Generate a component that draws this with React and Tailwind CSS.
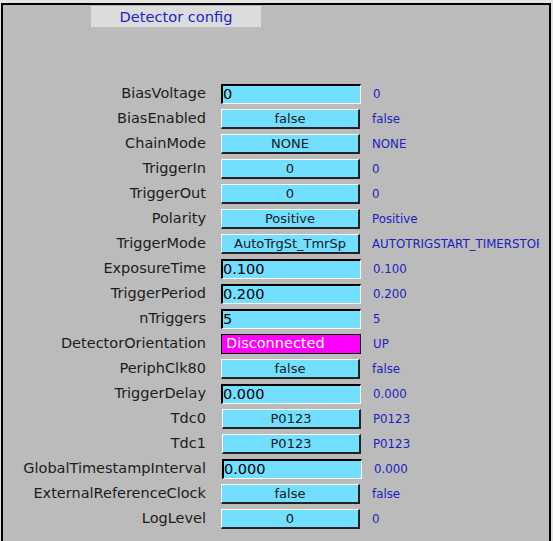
const rows = [
  { label: 'BiasVoltage', kind: 'entry', value: '0', rb: '0' },
  { label: 'BiasEnabled', kind: 'menu', value: 'false', rb: 'false' },
  { label: 'ChainMode', kind: 'menu', value: 'NONE', rb: 'NONE' },
  { label: 'TriggerIn', kind: 'menu', value: '0', rb: '0' },
  { label: 'TriggerOut', kind: 'menu', value: '0', rb: '0' },
  { label: 'Polarity', kind: 'menu', value: 'Positive', rb: 'Positive' },
  { label: 'TriggerMode', kind: 'menu', value: 'AutoTrgSt_TmrSp', rb: 'AUTOTRIGSTART_TIMERSTOP' },
  { label: 'ExposureTime', kind: 'entry', value: '0.100', rb: '0.100' },
  { label: 'TriggerPeriod', kind: 'entry', value: '0.200', rb: '0.200' },
  { label: 'nTriggers', kind: 'entry', value: '5', rb: '5' },
  { label: 'DetectorOrientation', kind: 'alarm', value: 'Disconnected', rb: 'UP' },
  { label: 'PeriphClk80', kind: 'menu', value: 'false', rb: 'false' },
  { label: 'TriggerDelay', kind: 'entry', value: '0.000', rb: '0.000' },
  { label: 'Tdc0', kind: 'menu', value: 'P0123', rb: 'P0123', shift: true },
  { label: 'Tdc1', kind: 'menu', value: 'P0123', rb: 'P0123', shift: true },
  { label: 'GlobalTimestampInterval', kind: 'entry', value: '0.000', rb: '0.000', shift: true },
  { label: 'ExternalReferenceClock', kind: 'menu', value: 'false', rb: 'false' },
  { label: 'LogLevel', kind: 'menu', value: '0', rb: '0' },
];

const Widget = ({ row }) => {
  if (row.kind === 'entry') {
    return (
      <div className="w-[140px] h-[20px] bg-[#73dfff] border-t-2 border-l-2 border-t-black border-l-black border-b border-r border-b-white border-r-white flex items-center text-[14.5px] leading-none text-black overflow-hidden">
        {row.value}
      </div>
    );
  }
  if (row.kind === 'alarm') {
    return (
      <div className="w-[140px] h-[20px] bg-[#ff00ff] border border-black flex items-center text-[14.5px] leading-none text-white pl-[4px]">
        {row.value}
      </div>
    );
  }
  return (
    <div className="w-[139px] h-[20px] bg-[#73dfff] border-t border-l border-t-white border-l-white border-b-2 border-r-2 border-b-[#222] border-r-[#222] flex items-center justify-center text-[13px] leading-none text-[#101820]">
      {row.value}
    </div>
  );
};

export default function App() {
  return (
    <div className="w-[553px] h-[541px] bg-[#e4e4e4] overflow-hidden font-['DejaVu_Sans',sans-serif]">
      <div className="ml-[1px] mt-[3px] w-[550px] h-[560px] border-l-2 border-t-2 border-r-2 border-black bg-[#bbbbbb]">
        <div className="ml-[88px] mt-[1px] w-[170px] h-[21px] bg-[#dcdcdc] flex items-center justify-center text-[14.6px] text-[#2222c8]">
          Detector config
        </div>
        <div className="mt-[54px] flex flex-col">
          {rows.map((row) => (
            <div key={row.label} className="h-[25px] flex items-center">
              <div className="w-[203px] text-right text-[14.5px] text-[#1c1c1c] leading-none">{row.label}</div>
              <div className={row.shift ? 'ml-[16px]' : 'ml-[15px]'}>
                <Widget row={row} />
              </div>
              <div className="ml-[12px] w-[167px] overflow-hidden whitespace-nowrap text-[11.8px] text-[#2020c0] leading-[16px]">
                {row.rb}
              </div>
            </div>
          ))}
        </div>
      </div>
    </div>
  );
}
